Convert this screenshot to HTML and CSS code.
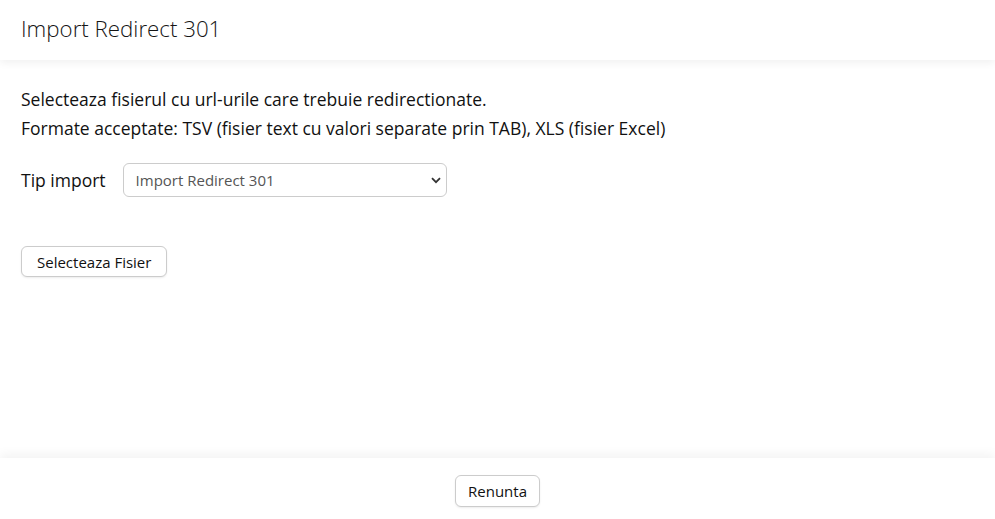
FILE: index.html
```html
<!DOCTYPE html>
<html lang="ro">
<head>
    <meta charset="UTF-8">
    <meta name="viewport" content="width=device-width, initial-scale=1.0">
    <title>Import Redirect 301</title>
    <link rel="stylesheet" href="styles.css">
</head>
<body>
    <div class="modal">
        <header class="modal-header">
            <h1>Import Redirect 301</h1>
        </header>
        <section class="modal-body">
            <p>Selecteaza fisierul cu url-urile care trebuie redirectionate.</p>
            <p>Formate acceptate: TSV (fisier text cu valori separate prin TAB), XLS (fisier Excel)</p>
            <div class="form-row">
                <label for="tipImport">Tip import</label>
                <div class="select-wrap">
                    <select id="tipImport">
                        <option>Import Redirect 301</option>
                    </select>
                    <svg class="chevron" width="10" height="7" viewBox="0 0 10 7">
                        <path d="M1 1.2 L5 5.2 L9 1.2" fill="none" stroke="#333" stroke-width="1.8"/>
                    </svg>
                </div>
            </div>
            <button class="btn btn-file">Selecteaza Fisier</button>
        </section>
        <footer class="modal-footer">
            <button class="btn">Renunta</button>
        </footer>
    </div>
</body>
</html>
```

FILE: styles.css
```css
body {
    font-family: "Open Sans", Arial, sans-serif;
    color: #111;
    margin: 0;
    padding: 0;
    background-color: white;
}
.modal {
    height: 519px;
    display: flex;
    flex-direction: column;
}
.modal-header {
    height: 60px;
    padding: 0 21px;
    display: flex;
    align-items: center;
    box-shadow: 0 3px 8px rgba(0, 0, 0, 0.06);
    position: relative;
    z-index: 1;
}
.modal-header h1 {
    margin: 0;
    font-size: 22.3px;
    font-weight: 300;
    color: #151515;
    padding-bottom: 3px;
}
.modal-body {
    flex: 1;
    padding: 25px 21px 0;
}
.modal-body p {
    margin: 0;
    font-size: 17.5px;
    line-height: 29px;
}
.form-row {
    display: flex;
    align-items: center;
    margin-top: 20px;
    gap: 17px;
}
.form-row label {
    font-size: 17.5px;
}
.select-wrap {
    position: relative;
}
.select-wrap select {
    appearance: none;
    width: 324px;
    height: 34px;
    padding: 0 12px;
    font-family: inherit;
    font-size: 15px;
    color: #555;
    background: white;
    border: 1px solid #ccc;
    border-radius: 6px;
}
.chevron {
    position: absolute;
    right: 6px;
    top: 14px;
    pointer-events: none;
}
.btn {
    font-family: inherit;
    font-size: 15px;
    color: #111;
    background: white;
    border: 1px solid #ccc;
    border-radius: 6px;
    padding: 0 15px;
    height: 31px;
    box-shadow: 0 1px 2px rgba(0, 0, 0, 0.08);
    cursor: pointer;
}
.btn-file {
    margin-top: 49px;
}
.modal-footer {
    height: 61px;
    display: flex;
    justify-content: center;
    align-items: flex-start;
    padding-top: 17px;
    box-sizing: border-box;
    box-shadow: 0 -4px 10px rgba(0, 0, 0, 0.05);
}
.modal-footer .btn {
    height: 32px;
    padding: 0 12px;
}
```
